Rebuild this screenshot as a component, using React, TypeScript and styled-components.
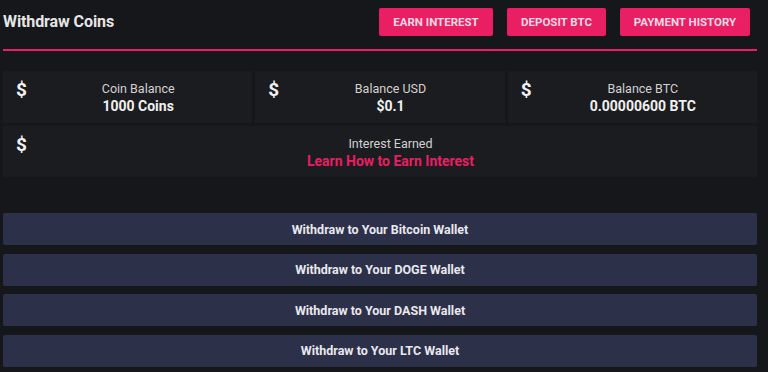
import * as React from 'react'
import styled, { createGlobalStyle } from 'styled-components'

const pink = '#e91e63'

const GlobalStyle = createGlobalStyle`
  html, body {
    margin: 0;
    padding: 0;
    background: #16171b;
    font-family: Roboto, 'Liberation Sans', sans-serif;
  }
`

const Page = styled.div`
  width: 754px;
  margin-left: 3px;
`

const Header = styled.div`
  display: flex;
  align-items: center;
  justify-content: space-between;
  height: 45px;
  padding: 4px 7px 0 0;
  border-bottom: 2px solid ${pink};
`

const Title = styled.h2`
  margin: 0 0 10px;
  font-size: 16px;
  font-weight: 700;
  color: #e6e6e6;
  letter-spacing: -0.1px;
`

const Actions = styled.div`
  display: flex;
  gap: 14px;
  margin-top: -9px;
`

const ActionButton = styled.button<{ $w: number }>`
  width: ${p => p.$w}px;
  height: 28px;
  border: 0;
  border-radius: 2px;
  background: ${pink};
  color: #f4dbe3;
  font-family: Roboto, 'Liberation Sans', sans-serif;
  font-size: 11.5px;
  font-weight: 700;
  text-transform: uppercase;
  padding: 0;
`

const Stats = styled.div`
  display: grid;
  grid-template-columns: repeat(3, 1fr);
  gap: 3px;
  margin-top: 20px;
`

const Card = styled.div<{ $span?: number }>`
  display: flex;
  align-items: flex-start;
  background: #1b1c20;
  grid-column: span ${p => p.$span || 1};
  padding: 9px 0 0 13px;
  box-sizing: border-box;
  height: ${p => (p.$span ? 51 : 52)}px;
`

const Icon = styled.span`
  width: 8px;
  font-size: 19px;
  font-weight: 700;
  color: #f2f2f2;
  line-height: 20px;
`

const Info = styled.div`
  flex: 1;
  display: flex;
  flex-direction: column;
  align-items: center;
  padding-top: 1px;
`

const Label = styled.span`
  font-size: 12.5px;
  color: #d2d2d2;
  line-height: 16px;
`

const Value = styled.span<{ $accent?: boolean }>`
  font-size: 14px;
  font-weight: 700;
  color: ${p => (p.$accent ? pink : '#f0f0f0')};
  line-height: 18px;
`

const Wallets = styled.div`
  display: flex;
  flex-direction: column;
  gap: 8.5px;
  margin-top: 36px;
`

const WalletButton = styled.button`
  height: 32px;
  border: 0;
  border-radius: 2px;
  background: #2d3049;
  color: #e8e8ee;
  font-family: Roboto, 'Liberation Sans', sans-serif;
  font-size: 12.5px;
  font-weight: 700;
`

const stats = [
  { label: 'Coin Balance', value: '1000 Coins' },
  { label: 'Balance USD', value: '$0.1' },
  { label: 'Balance BTC', value: '0.00000600 BTC' },
]

const wallets = ['Bitcoin', 'DOGE', 'DASH', 'LTC']

export default function App() {
  return (
    <Page>
      <GlobalStyle />
      <Header>
        <Title>Withdraw Coins</Title>
        <Actions>
          <ActionButton $w={114}>Earn Interest</ActionButton>
          <ActionButton $w={99}>Deposit BTC</ActionButton>
          <ActionButton $w={130}>Payment History</ActionButton>
        </Actions>
      </Header>
      <Stats>
        {stats.map(s => (
          <Card key={s.label}>
            <Icon>$</Icon>
            <Info>
              <Label>{s.label}</Label>
              <Value>{s.value}</Value>
            </Info>
          </Card>
        ))}
        <Card $span={3}>
          <Icon>$</Icon>
          <Info>
            <Label>Interest Earned</Label>
            <Value $accent>Learn How to Earn Interest</Value>
          </Info>
        </Card>
      </Stats>
      <Wallets>
        {wallets.map(w => (
          <WalletButton key={w}>Withdraw to Your {w} Wallet</WalletButton>
        ))}
      </Wallets>
    </Page>
  )
}
